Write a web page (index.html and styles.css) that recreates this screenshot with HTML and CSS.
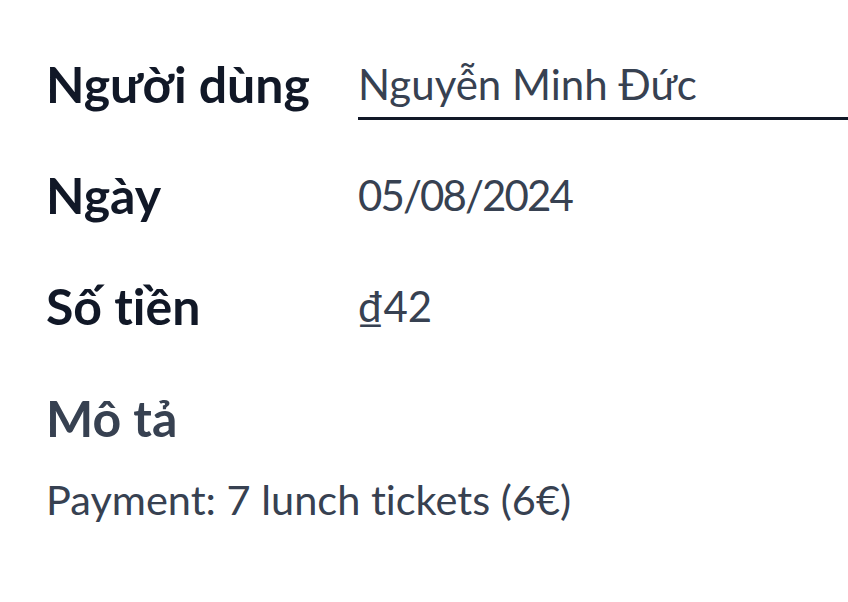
FILE: index.html
```html
<!DOCTYPE html>
<html lang="vi">
<head>
  <meta charset="UTF-8">
  <meta name="viewport" content="width=device-width, initial-scale=1.0">
  <title>Thanh toán bữa trưa</title>
  <link rel="stylesheet" href="styles.css">
</head>
<body>

  <main class="sheet">
    <!-- Các trường chính -->
    <div class="fields">
      <label class="fields__label">Người dùng</label>
      <div class="fields__value fields__value--input">Nguyễn Minh Đức</div>

      <label class="fields__label">Ngày</label>
      <div class="fields__value fields__value--date">05/08/2024</div>

      <label class="fields__label">Số tiền</label>
      <div class="fields__value">₫42</div>
    </div>

    <!-- Mô tả -->
    <section class="note">
      <h2>Mô tả</h2>
      <p>Payment: 7 lunch tickets (6€)</p>
    </section>
  </main>

</body>
</html>
```

FILE: styles.css
```css
:root{
  --ink:#111827;
  --text:#374151;
  --bg:#fff;
}
*{margin:0;padding:0;box-sizing:border-box;}
body{background:var(--bg);color:var(--text);font-family:Lato,'Noto Sans',sans-serif;font-variant-ligatures:none;}

.sheet{padding:54px 0 0 46px;}

.fields{display:grid;grid-template-columns:312px 1fr;grid-auto-rows:111px;align-items:start;}
.fields__label{font-size:50px;font-weight:700;line-height:60px;color:var(--ink);}
.fields__value{font-size:42px;line-height:60px;color:var(--text);}
.fields__value--input{padding-bottom:3px;border-bottom:3px solid var(--ink);}
.fields__value--date{letter-spacing:-1.9px;}

.note{margin-top:1px;}
.note h2{font-size:50px;font-weight:700;line-height:60px;color:var(--text);}
.note p{font-size:41.5px;line-height:50px;margin-top:26px;}
```
